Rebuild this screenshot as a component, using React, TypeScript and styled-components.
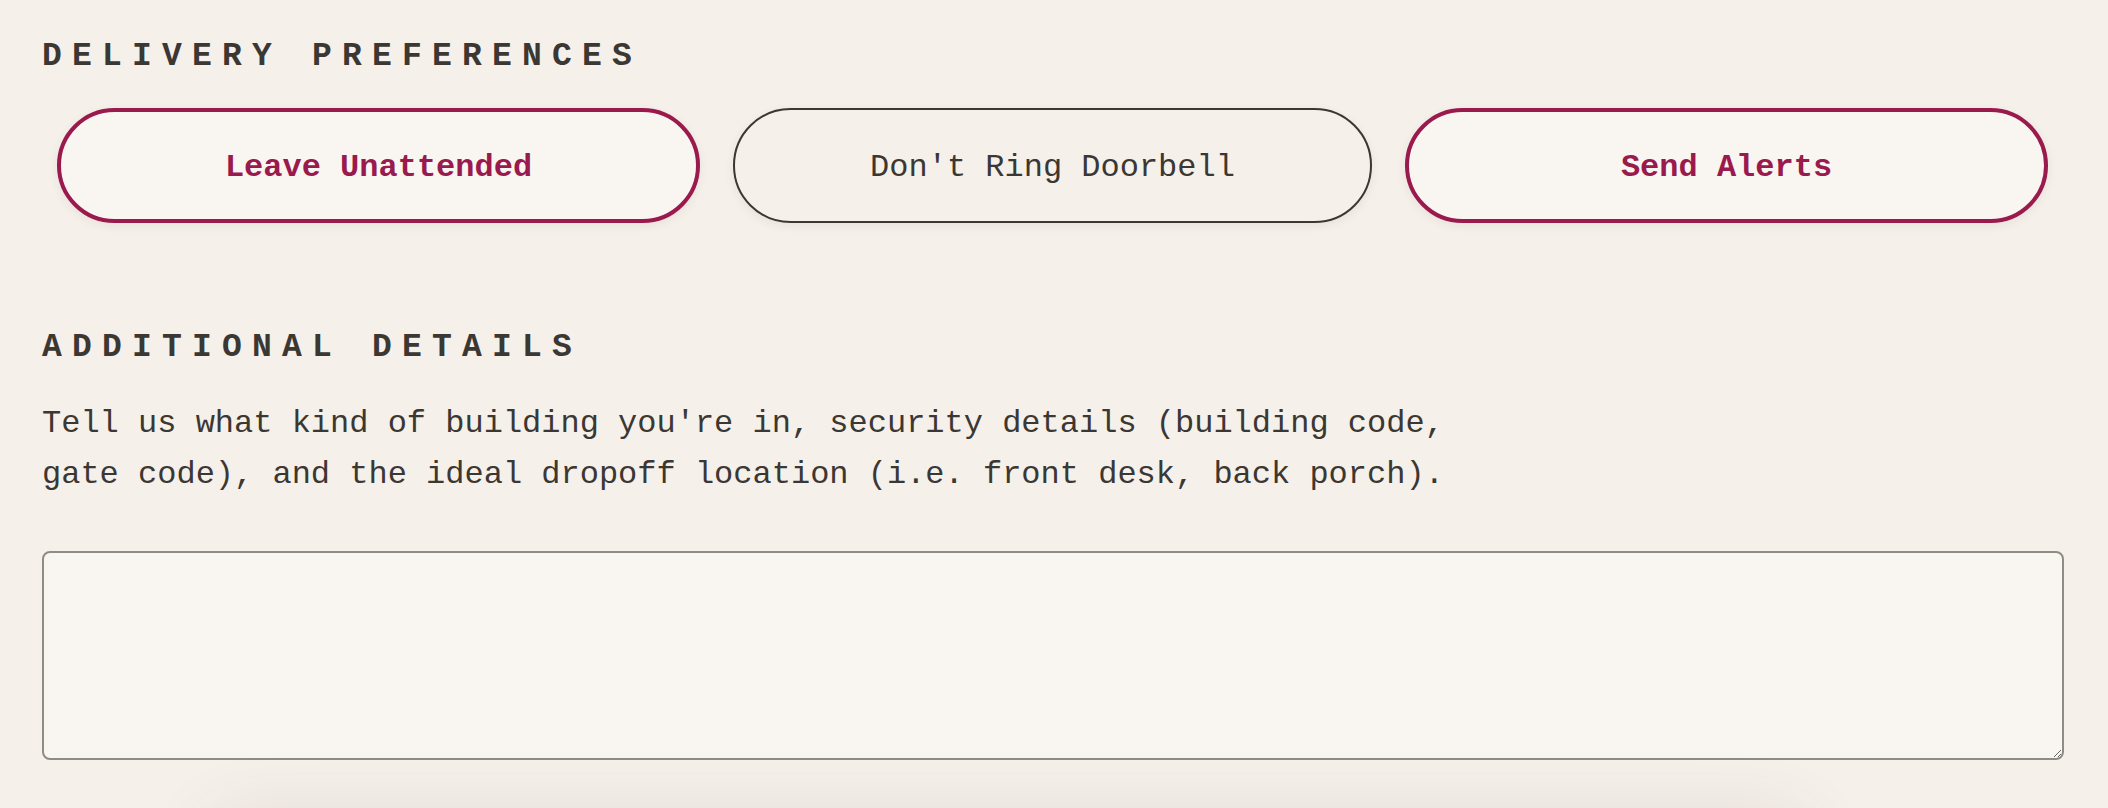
import React, { useState } from "react";
import styled, { createGlobalStyle } from "styled-components";

const GlobalStyle = createGlobalStyle`
  html, body {
    margin: 0;
    padding: 0;
    background: #f5f0ea;
  }
  * { box-sizing: border-box; }
`;

const Page = styled.main`
  padding: 37px 44px 0 42px;
  background: #f5f0ea;
  font-family: "Liberation Mono", "Courier New", monospace;
  color: #3b3733;
  overflow: hidden;
  min-height: 808px;
`;

const SectionTitle = styled.h2<{ $gap?: number }>`
  margin: ${(p) => p.$gap ?? 0}px 0 0;
  font-family: "Liberation Mono", "Courier New", monospace;
  font-weight: 700;
  font-size: 33px;
  line-height: 40px;
  letter-spacing: 10.2px;
  text-transform: uppercase;
  color: #3b3733;
`;

const OptionRow = styled.div`
  display: flex;
  gap: 33px;
  padding: 0 16px 0 15px;
  margin-top: 31px;
`;

const Option = styled.button<{ $active: boolean }>`
  flex: 1;
  height: 115px;
  display: flex;
  align-items: center;
  justify-content: center;
  border-radius: 58px;
  border: ${(p) => (p.$active ? "4px solid #9a1a4e" : "2px solid #3b3733")};
  background: ${(p) => (p.$active ? "#f9f6f2" : "#f5f0ea")};
  color: ${(p) => (p.$active ? "#9a1a4e" : "#3b3733")};
  font-family: "Liberation Mono", "Courier New", monospace;
  font-weight: ${(p) => (p.$active ? 700 : 400)};
  font-size: 32px;
  line-height: 32px;
  padding: 4px 0 0;
  box-shadow: 0 3px 10px rgba(80, 60, 40, 0.08);
  cursor: pointer;
`;

const Description = styled.p`
  margin: 29.5px 0 0;
  max-width: 1440px;
  font-size: 32px;
  line-height: 51px;
  font-weight: 400;
  color: #3b3733;
`;

const Details = styled.textarea`
  display: block;
  width: 2022px;
  height: 209px;
  margin-top: 51px;
  border: 2px solid #8f8c86;
  border-radius: 8px;
  background: #f9f6f2;
  font-family: "Liberation Mono", "Courier New", monospace;
  font-size: 32px;
  color: #3b3733;
  padding: 16px;
  outline: none;
`;

const NextCard = styled.div`
  margin: 62px 260px 0 170px;
  height: 200px;
  border-radius: 30px;
  background: #f5f0ea;
  box-shadow: 0 0 75px rgba(90, 70, 50, 0.14);
`;

const options = ["Leave Unattended", "Don't Ring Doorbell", "Send Alerts"];

export default function App() {
  const [selected, setSelected] = useState<Record<string, boolean>>({
    "Leave Unattended": true,
    "Don't Ring Doorbell": false,
    "Send Alerts": true,
  });

  return (
    <>
      <GlobalStyle />
      <Page>
        <SectionTitle>Delivery Preferences</SectionTitle>
        <OptionRow>
          {options.map((o) => (
            <Option
              key={o}
              $active={selected[o]}
              onClick={() => setSelected((s) => ({ ...s, [o]: !s[o] }))}
            >
              {o}
            </Option>
          ))}
        </OptionRow>
        <SectionTitle $gap={105}>Additional Details</SectionTitle>
        <Description>
          Tell us what kind of building you're in, security details (building code,
          gate code), and the ideal dropoff location (i.e. front desk, back porch).
        </Description>
        <Details />
        <NextCard />
      </Page>
    </>
  );
}
